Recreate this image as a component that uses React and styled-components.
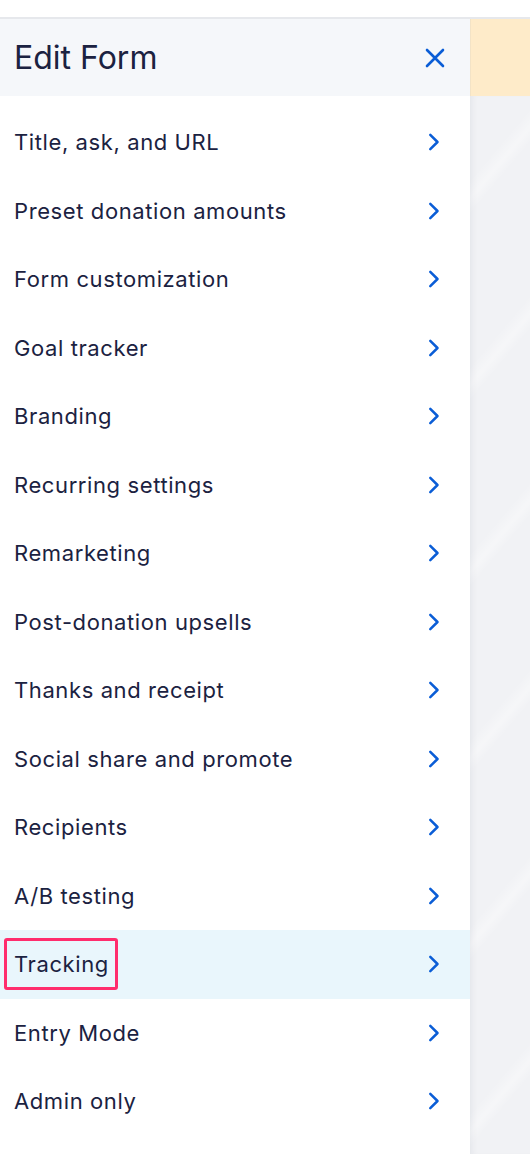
import React from 'react';
import styled, { createGlobalStyle } from 'styled-components';

const GlobalStyle = createGlobalStyle`
  html, body {
    margin: 0;
    padding: 0;
    background: #ffffff;
    font-family: Inter, "Noto Sans", "Liberation Sans", sans-serif;
    -webkit-font-smoothing: antialiased;
  }
`;

const Page = styled.div`
  width: 530px;
  height: 1154px;
  overflow: hidden;
  display: flex;
  flex-direction: column;
  background: #ffffff;
`;

const TopStrip = styled.div`
  height: 17px;
  flex: none;
  border-bottom: 2px solid #e6e8ec;
`;

const Body = styled.div`
  flex: 1;
  display: grid;
  grid-template-columns: 470px 1fr;
  grid-template-rows: 77px 1fr;
`;

const Header = styled.div`
  display: flex;
  align-items: center;
  justify-content: space-between;
  padding: 0 25px 0 14px;
  background: #f5f7fa;
`;

const Title = styled.h1`
  margin: 0;
  font-size: 32px;
  font-weight: 400;
  color: #1b2241;
`;

const CloseButton = styled.button`
  border: 0;
  background: none;
  padding: 0;
  width: 20px;
  height: 20px;
  display: flex;
  align-items: center;
  justify-content: center;
  color: #0a5dd6;
  cursor: pointer;
`;

const Banner = styled.div`
  background: #feebc9;
  border-left: 1px solid #f3e3c6;
`;

const Menu = styled.ul`
  list-style: none;
  margin: 0;
  padding: 12px 0 0;
  background: #ffffff;
`;

const Row = styled.li`
  height: 68.5px;
  display: flex;
  align-items: center;
  justify-content: space-between;
  padding: 0 30px 0 14px;
  background: ${(p) => (p.$active ? '#e9f6fc' : 'transparent')};
  cursor: pointer;
`;

const Label = styled.span`
  position: relative;
  font-size: 22px;
  color: #1b2241;
  letter-spacing: 0.6px;
`;

const Outline = styled.span`
  position: absolute;
  left: -10px;
  right: -9px;
  top: -13px;
  bottom: -13px;
  border: 3px solid #ff2d6d;
  border-radius: 3px;
`;

const Backdrop = styled.div`
  background-color: #f1f2f5;
  background-image: repeating-linear-gradient(
    -50deg,
    rgba(255, 255, 255, 0) 0px,
    rgba(255, 255, 255, 0) 50px,
    rgba(255, 255, 255, 0.35) 60px,
    rgba(255, 255, 255, 0) 72px,
    rgba(255, 255, 255, 0) 120px
  );
  box-shadow: inset 6px 0 6px -4px rgba(20, 30, 60, 0.06);
`;

const Chevron = () => (
  <svg width="12" height="18" viewBox="0 0 12 18" fill="none">
    <path d="M2.3 1.8 L9.5 9 L2.3 16.2" stroke="#0a5dd6" strokeWidth="2.5" strokeLinecap="round" strokeLinejoin="round" />
  </svg>
);

const CloseIcon = () => (
  <svg width="20" height="20" viewBox="0 0 20 20" fill="none">
    <path d="M2 2 L18 18 M18 2 L2 18" stroke="currentColor" strokeWidth="2.6" strokeLinecap="round" />
  </svg>
);

const items = [
  'Title, ask, and URL',
  'Preset donation amounts',
  'Form customization',
  'Goal tracker',
  'Branding',
  'Recurring settings',
  'Remarketing',
  'Post-donation upsells',
  'Thanks and receipt',
  'Social share and promote',
  'Recipients',
  'A/B testing',
  'Tracking',
  'Entry Mode',
  'Admin only',
];

export default function App() {
  return (
    <Page>
      <GlobalStyle />
      <TopStrip />
      <Body>
        <Header>
          <Title>Edit Form</Title>
          <CloseButton aria-label="Close">
            <CloseIcon />
          </CloseButton>
        </Header>
        <Banner />
        <Menu>
          {items.map((item) => {
            const active = item === 'Tracking';
            return (
              <Row key={item} $active={active}>
                <Label>
                  {item}
                  {active && <Outline />}
                </Label>
                <Chevron />
              </Row>
            );
          })}
        </Menu>
        <Backdrop />
      </Body>
    </Page>
  );
}
